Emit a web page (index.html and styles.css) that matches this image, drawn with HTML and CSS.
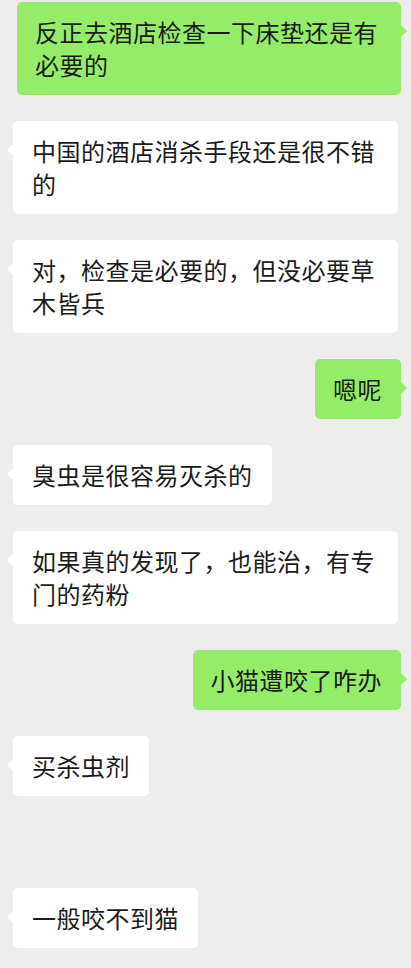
FILE: index.html
```html
<!DOCTYPE html>
<html lang="zh-CN">
<head>
    <meta charset="UTF-8">
    <meta name="viewport" content="width=device-width, initial-scale=1.0">
    <title>聊天记录</title>
    <link rel="stylesheet" href="styles.css">
</head>
<body>
    <div class="chat">
        <div class="row mine first">
            <div class="bubble">反正去酒店检查一下床垫还是有必要的</div>
        </div>
        <div class="row theirs">
            <div class="bubble">中国的酒店消杀手段还是很不错的</div>
        </div>
        <div class="row theirs">
            <div class="bubble">对，检查是必要的，但没必要草木皆兵</div>
        </div>
        <div class="row mine">
            <div class="bubble">嗯呢</div>
        </div>
        <div class="row theirs">
            <div class="bubble">臭虫是很容易灭杀的</div>
        </div>
        <div class="row theirs">
            <div class="bubble">如果真的发现了，也能治，有专门的药粉</div>
        </div>
        <div class="row mine">
            <div class="bubble">小猫遭咬了咋办</div>
        </div>
        <div class="row theirs">
            <div class="bubble">买杀虫剂</div>
        </div>
        <!-- faint watermark between messages -->
        <div class="mark">
            <span class="mark-a"></span>
            <span class="mark-b"></span>
        </div>
        <div class="row theirs">
            <div class="bubble">一般咬不到猫</div>
        </div>
    </div>
</body>
</html>
```

FILE: styles.css
```css
body {
    margin: 0;
    padding: 0;
    background-color: #ededed;
    font-family: "Noto Sans CJK SC", "Noto Sans", sans-serif;
    color: #1b1b1b;
}

.chat {
    padding: 2px 10px 20px 13px;
    display: flex;
    flex-direction: column;
    gap: 26px;
}

.row {
    display: flex;
}

.row.mine {
    justify-content: flex-end;
}

.row.theirs {
    justify-content: flex-start;
}

.bubble {
    position: relative;
    max-width: 385px;
    box-sizing: border-box;
    padding: 13px 19px 14px 19px;
    font-size: 24px;
    line-height: 33px;
    letter-spacing: 0.5px;
    border-radius: 5px;
    background-color: #ffffff;
}

.mine .bubble {
    max-width: 384px;
    background-color: #95ec69;
    padding-left: 18px;
}

/* little tails */
.bubble::after {
    content: "";
    position: absolute;
    top: 22px;
    width: 0;
    height: 0;
    border-top: 7px solid transparent;
    border-bottom: 7px solid transparent;
}

.theirs .bubble::after {
    left: -6px;
    border-right: 7px solid #ffffff;
}

.mine .bubble::after {
    right: -6px;
    border-left: 7px solid #95ec69;
}

.mark {
    height: 40px;
    display: flex;
    justify-content: center;
    gap: 16px;
    align-items: flex-end;
    padding-right: 10px;
}

.mark-a,
.mark-b {
    display: block;
    width: 16px;
    height: 28px;
    background-color: #eeeeee;
}
```
